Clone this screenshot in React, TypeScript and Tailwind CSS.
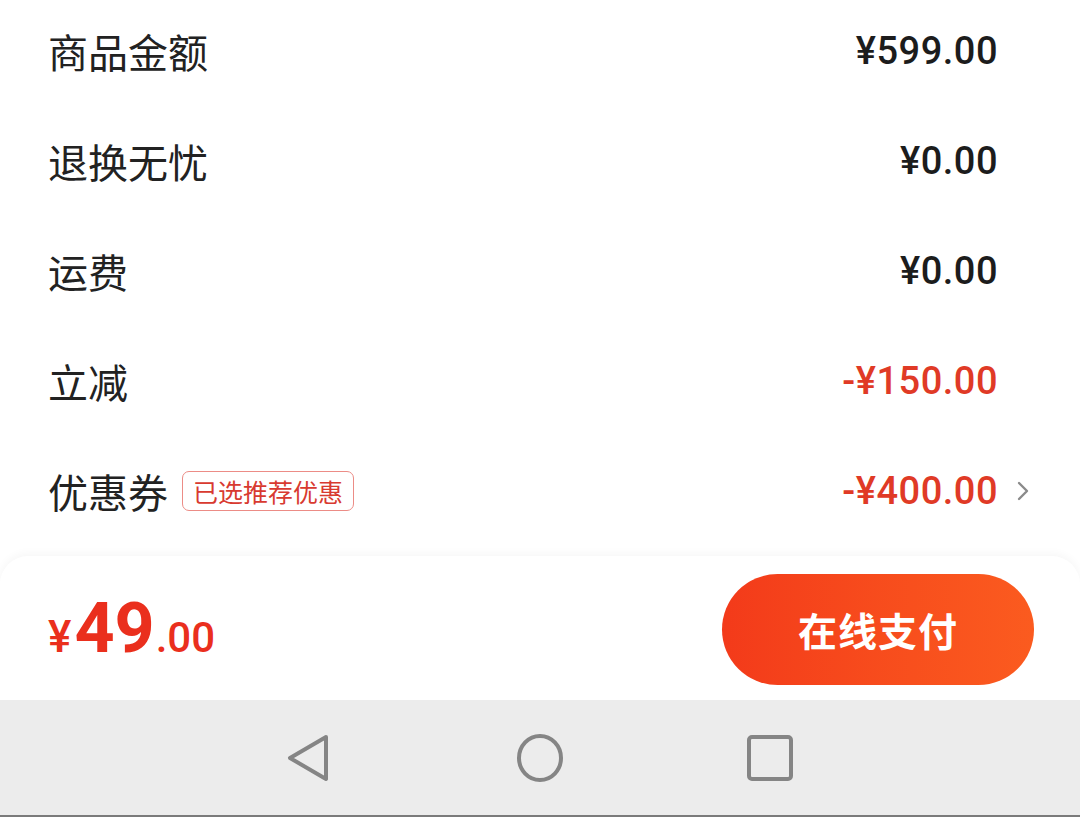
const CJK = "font-['Noto_Sans_CJK_SC','Noto_Sans',sans-serif]"
const NUM = "font-['Roboto','Noto_Sans',sans-serif]"

interface FeeRow {
  label: string
  value: string
  discount?: boolean
  tag?: string
  arrow?: boolean
}

const rows: FeeRow[] = [
  { label: '商品金额', value: '¥599.00' },
  { label: '退换无忧', value: '¥0.00' },
  { label: '运费', value: '¥0.00' },
  { label: '立减', value: '-¥150.00', discount: true },
  { label: '优惠券', value: '-¥400.00', discount: true, tag: '已选推荐优惠', arrow: true },
]

const Row = ({ row }: { row: FeeRow }) => (
  <div className="relative flex h-[110px] items-center justify-between">
    <div className="flex items-center">
      <span className={`${CJK} text-[40px] leading-none text-[#222]`}>{row.label}</span>
      {row.tag && (
        <span
          className={`${CJK} ml-[14px] flex h-[40px] items-center rounded-[7px] border-[1.5px] border-[#ec8c86] px-[10px] text-[25px] leading-none text-[#d83a30]`}
        >
          {row.tag}
        </span>
      )}
    </div>
    <span
      className={`${NUM} pr-[34px] text-[38px] font-medium leading-none tracking-[0.5px] ${
        row.discount ? 'text-[#e03a26]' : 'text-[#1c1c1c]'
      }`}
    >
      {row.value}
    </span>
    {row.arrow && (
      <svg
        className="absolute right-[2px] top-1/2 h-[22px] w-[14px] -translate-y-1/2"
        viewBox="0 0 14 22"
        fill="none"
        stroke="#8a8a8a"
        strokeWidth="2.4"
        strokeLinecap="round"
        strokeLinejoin="round"
      >
        <path d="M3 3l8 8-8 8" />
      </svg>
    )}
  </div>
)

const NavBar = () => (
  <div className="flex h-[117px] items-center justify-center border-b-[2px] border-[#7a7a7a] bg-[#ececec]">
    <div className="flex w-[510px] items-center justify-between">
      <svg className="h-[50px] w-[50px]" viewBox="0 0 50 50" fill="none" stroke="#858585" strokeWidth="4" strokeLinejoin="round">
        <path d="M41 4L5 25l36 21z" />
      </svg>
      <svg className="h-[50px] w-[50px]" viewBox="0 0 50 50" fill="none" stroke="#858585" strokeWidth="4">
        <ellipse cx="25" cy="25" rx="21" ry="22" />
      </svg>
      <svg className="h-[50px] w-[50px]" viewBox="0 0 50 50" fill="none" stroke="#858585" strokeWidth="4">
        <rect x="4" y="4" width="42" height="42" rx="3" />
      </svg>
    </div>
  </div>
)

export default function App() {
  return (
    <div className="flex h-[817px] w-[1080px] flex-col overflow-hidden bg-white">
      {/* fee details */}
      <div className="h-[556px] overflow-hidden px-[48px]">
        <div className="-mt-[4px]">
          {rows.map((r) => (
            <Row key={r.label} row={r} />
          ))}
        </div>
      </div>

      {/* total + pay */}
      <div className="flex h-[144px] items-center justify-between rounded-t-[28px] bg-white pl-[48px] pr-[46px] shadow-[0_-3px_8px_rgba(0,0,0,0.035)]">
        <div className={`${NUM} flex items-baseline leading-none text-[#ea2f1d]`}>
          <span className="text-[44px] font-medium">¥</span>
          <span className="ml-[3px] text-[70px] font-bold">49</span>
          <span className="ml-[1px] text-[42px] font-medium">.00</span>
        </div>
        <button
          className={`${CJK} mt-[2px] flex h-[111px] w-[312px] items-center justify-center rounded-full bg-gradient-to-r from-[#f33a1a] to-[#fb5b1f] text-[39px] font-bold tracking-[1px] text-white`}
        >
          在线支付
        </button>
      </div>

      <NavBar />
    </div>
  )
}
